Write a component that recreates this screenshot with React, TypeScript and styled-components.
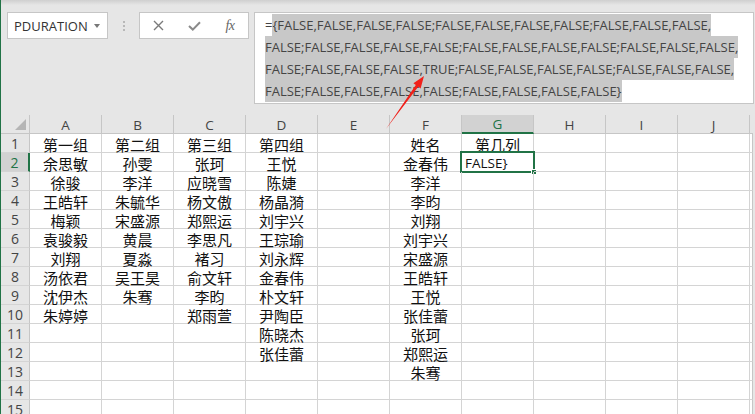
import React from 'react';
import styled, { createGlobalStyle } from 'styled-components';

const GREEN = '#217346';
const GRID = '#d4d4d4';
const HEAD_LINE = '#c6c6c6';
const PANEL = '#e6e6e6';
const LATIN = '"Open Sans", "Liberation Sans", sans-serif';
const CJK = '"Noto Sans CJK SC", "Open Sans", sans-serif';

const GlobalStyle = createGlobalStyle`
  html, body {
    margin: 0;
    padding: 0;
    background: ${PANEL};
    overflow: hidden;
  }
  * {
    box-sizing: border-box;
  }
`;

const Page = styled.div`
  width: 755px;
  height: 414px;
  border-left: 1px solid ${GREEN};
  background: ${PANEL};
  position: relative;
  overflow: hidden;
`;

const TopBar = styled.div`
  height: 104px;
  display: flex;
  align-items: flex-start;
  padding: 12px 1px 0 6px;
  background: linear-gradient(#cfcfcf 0px, ${PANEL} 5px);
`;

const NameBox = styled.div`
  width: 101px;
  height: 27px;
  border: 1px solid ${HEAD_LINE};
  background: #fff;
  display: flex;
  align-items: center;
  justify-content: space-between;
  padding: 0 7px 0 6px;
  font-family: ${LATIN};
  font-size: 13px;
  color: #333;
`;

const Caret = styled.span`
  width: 0;
  height: 0;
  border-left: 3.5px solid transparent;
  border-right: 3.5px solid transparent;
  border-top: 4px solid #777;
`;

const Grip = styled.div`
  width: 31px;
  height: 27px;
  display: flex;
  flex-direction: column;
  align-items: center;
  justify-content: center;
  gap: 2px;
`;

const Dot = styled.span`
  width: 2px;
  height: 2px;
  background: #b8b8b8;
`;

const ButtonBox = styled.div`
  width: 110px;
  height: 27px;
  border: 1px solid ${HEAD_LINE};
  background: #fff;
  display: flex;
  align-items: center;
`;

const BarButton = styled.div`
  width: 36px;
  height: 25px;
  display: flex;
  align-items: center;
  justify-content: center;
  color: #7a7a7a;
`;

const Fx = styled.span`
  font-family: "Liberation Serif", serif;
  font-style: italic;
  font-size: 14px;
  color: #666;
  letter-spacing: -0.5px;
`;

const FormulaBox = styled.div`
  flex: 1;
  height: 92px;
  margin-left: 5px;
  border: 1px solid ${HEAD_LINE};
  background: #fff;
  padding: 1px 0 0 10px;
  font-family: ${LATIN};
  font-size: 13px;
  color: #444;
`;

const FormulaLine = styled.div`
  height: 22px;
  line-height: 22px;
  white-space: nowrap;
`;

const Selected = styled.span`
  display: inline-block;
  background: #c8c8c8;
  height: 22px;
`;

const Sheet = styled.div`
  margin-top: 11px;
  display: grid;
  grid-template-columns: 29px repeat(10, 72px) 3px;
  grid-auto-rows: 19px;
  background: #fff;
  width: 752px;
`;

const Corner = styled.div`
  background: ${PANEL};
  border-right: 1px solid ${HEAD_LINE};
  border-bottom: 1px solid ${HEAD_LINE};
  display: flex;
  align-items: flex-end;
  justify-content: flex-end;
  padding: 0 3px 3px 0;
`;

const CornerMark = styled.span`
  width: 11px;
  height: 11px;
  background: #b5b5b5;
  clip-path: polygon(100% 0, 100% 100%, 0 100%);
`;

const ColHead = styled.div<{ $active?: boolean }>`
  background: ${(p) => (p.$active ? '#d2d2d2' : PANEL)};
  border-right: 1px solid ${HEAD_LINE};
  border-bottom: ${(p) => (p.$active ? `2px solid ${GREEN}` : `1px solid ${HEAD_LINE}`)};
  display: flex;
  align-items: center;
  justify-content: center;
  font-family: ${LATIN};
  font-size: 13.5px;
  color: ${(p) => (p.$active ? GREEN : '#444')};
  padding-top: 1px;
`;

const EdgeHead = styled.div`
  background: ${PANEL};
  border-bottom: 1px solid ${HEAD_LINE};
`;

const RowHead = styled.div<{ $active?: boolean }>`
  background: ${(p) => (p.$active ? '#d2d2d2' : PANEL)};
  border-right: ${(p) => (p.$active ? `2px solid ${GREEN}` : `1px solid ${HEAD_LINE}`)};
  border-bottom: 1px solid ${GRID};
  display: flex;
  align-items: center;
  justify-content: center;
  font-family: ${LATIN};
  font-size: 14px;
  color: ${(p) => (p.$active ? GREEN : '#444')};
  padding-top: 1px;
`;

const Cell = styled.div<{ $latin?: boolean }>`
  position: relative;
  border-right: 1px solid ${GRID};
  border-bottom: 1px solid ${GRID};
  display: flex;
  align-items: center;
  justify-content: ${(p) => (p.$latin ? 'flex-start' : 'center')};
  padding: ${(p) => (p.$latin ? '1px 0 0 3px' : '2px 0 0 0')};
  font-family: ${(p) => (p.$latin ? LATIN : CJK)};
  font-size: ${(p) => (p.$latin ? '13.5px' : '15px')};
  color: #111;
  white-space: nowrap;
  overflow: visible;
`;

const EdgeCell = styled.div`
  border-right: 1px solid ${HEAD_LINE};
  border-bottom: 1px solid ${GRID};
`;

const Selection = styled.div`
  position: absolute;
  top: -2px;
  left: -2px;
  right: -2px;
  bottom: -2px;
  border: 2px solid ${GREEN};
  pointer-events: none;
`;

const FillHandle = styled.span`
  position: absolute;
  right: -4px;
  bottom: -4px;
  width: 6px;
  height: 6px;
  background: ${GREEN};
  border: 1px solid #fff;
`;

const Overlay = styled.svg`
  position: absolute;
  left: 0;
  top: 0;
  pointer-events: none;
`;

const COLS = ['A', 'B', 'C', 'D', 'E', 'F', 'G', 'H', 'I', 'J'];

const columnData: string[][] = [
  ['第一组', '余思敏', '徐骏', '王皓轩', '梅颖', '袁骏毅', '刘翔', '汤依君', '沈伊杰', '朱婷婷'],
  ['第二组', '孙雯', '李洋', '朱毓华', '宋盛源', '黄晨', '夏淼', '吴王昊', '朱骞'],
  ['第三组', '张珂', '应晓雪', '杨文傲', '郑熙运', '李思凡', '褚习', '俞文轩', '李昀', '郑雨萱'],
  ['第四组', '王悦', '陈婕', '杨晶漪', '刘宇兴', '王琮瑜', '刘永辉', '金春伟', '朴文轩', '尹陶臣', '陈晓杰', '张佳蕾'],
  [],
  ['姓名', '金春伟', '李洋', '李昀', '刘翔', '刘宇兴', '宋盛源', '王皓轩', '王悦', '张佳蕾', '张珂', '郑熙运', '朱骞'],
  ['第几列', 'FALSE}'],
  [],
  [],
  [],
];

const formulaLines = [
  'FALSE,FALSE,FALSE,FALSE;FALSE,FALSE,FALSE,FALSE;FALSE,FALSE,FALSE,',
  'FALSE;FALSE,FALSE,FALSE,FALSE;FALSE,FALSE,FALSE,FALSE;FALSE,FALSE,FALSE,',
  'FALSE;FALSE,FALSE,FALSE,TRUE;FALSE,FALSE,FALSE,FALSE;FALSE,FALSE,FALSE,',
  'FALSE;FALSE,FALSE,FALSE,FALSE;FALSE,FALSE,FALSE,FALSE}',
];

const ROW_COUNT = 15;

const App: React.FC = () => {
  const rows = Array.from({ length: ROW_COUNT }, (_, i) => i + 1);

  return (
    <Page>
      <GlobalStyle />
      <TopBar>
        <NameBox>
          <span>PDURATION</span>
          <Caret />
        </NameBox>
        <Grip>
          <Dot />
          <Dot />
          <Dot />
        </Grip>
        <ButtonBox>
          <BarButton>
            <svg width="11" height="11" viewBox="0 0 11 11">
              <path d="M1 1 L10 10 M10 1 L1 10" stroke="currentColor" strokeWidth="1.4" fill="none" />
            </svg>
          </BarButton>
          <BarButton>
            <svg width="13" height="10" viewBox="0 0 13 10">
              <path d="M1 5 L4.8 8.6 L12 1.2" stroke="#8a8a8a" strokeWidth="2" fill="none" />
            </svg>
          </BarButton>
          <BarButton>
            <Fx>fx</Fx>
          </BarButton>
        </ButtonBox>
        <FormulaBox>
          {formulaLines.map((line, i) => (
            <FormulaLine key={i}>
              {i === 0 && '='}
              <Selected>{i === 0 ? '{' + line : line}</Selected>
            </FormulaLine>
          ))}
        </FormulaBox>
      </TopBar>

      <Sheet>
        <Corner>
          <CornerMark />
        </Corner>
        {COLS.map((c) => (
          <ColHead key={c} $active={c === 'G'}>
            {c}
          </ColHead>
        ))}
        <EdgeHead />
        {rows.map((r) => (
          <React.Fragment key={r}>
            <RowHead $active={r === 2}>{r}</RowHead>
            {COLS.map((c, ci) => {
              const value = columnData[ci][r - 1] || '';
              const isActive = c === 'G' && r === 2;
              return (
                <Cell key={c} $latin={isActive}>
                  {value}
                  {isActive && (
                    <Selection>
                      <FillHandle />
                    </Selection>
                  )}
                </Cell>
              );
            })}
            <EdgeCell />
          </React.Fragment>
        ))}
      </Sheet>

      <Overlay width="755" height="414" viewBox="0 0 755 414">
        <polygon
          points="385,129 417.2,86.7 419.6,88.4 423,76 412.4,83.3 414.8,84.9"
          fill="#f0201a"
        />
      </Overlay>
    </Page>
  );
};

export default App;
